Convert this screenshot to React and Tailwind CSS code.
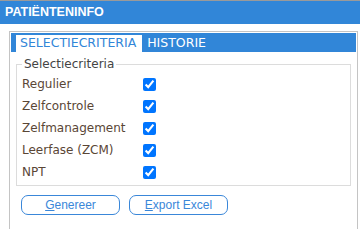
export default function App() {
  const items = ["Regulier", "Zelfcontrole", "Zelfmanagement", "Leerfase (ZCM)", "NPT"];
  return (
    <div className="w-[360px] h-[229px] bg-white overflow-hidden font-['DejaVu_Sans',sans-serif]">
      <div className="border-t border-[#9a9a9a] bg-[#3186d8] h-[24px] flex items-center px-[5px] text-white text-[12.5px] font-bold font-['Liberation_Sans',sans-serif]">
        PATIËNTENINFO
      </div>
      <div className="ml-[9px] mr-[2px] mt-[7px] h-[198px] border border-[#c4c4c4] border-b-0 pt-px px-px">
        <div className="bg-[#3186d8] h-[19px] flex items-end pl-[5px]">
          <div className="bg-white text-[#3186d8] text-[12.5px] h-[17px] pl-[4px] pr-[6px] flex items-center leading-none">
            SELECTIECRITERIA
          </div>
          <div className="text-white text-[12.5px] h-[17px] pl-[5px] flex items-center leading-none">HISTORIE</div>
        </div>
        <fieldset className="mx-[5px] mt-[3px] border border-[#dcdcdc] pl-[5px] pb-[2px]">
          <legend className="text-[12px] text-[#444] px-[2px]">Selectiecriteria</legend>
          {items.map((t) => (
            <label key={t} className="flex items-center h-[22px] text-[12px] text-[#5a4636]">
              <span className="w-[121px]">{t}</span>
              <input type="checkbox" defaultChecked className="w-[13px] h-[13px] m-0" />
            </label>
          ))}
        </fieldset>
        <div className="flex gap-[9px] ml-[10px] mt-[9px] font-['Liberation_Sans',sans-serif]">
          <button className="w-[99px] h-[20px] border border-[#3a87d9] rounded-[7px] text-[#3a87d9] text-[12px] leading-none">
            <span className="underline">G</span>enereer
          </button>
          <button className="w-[99px] h-[20px] border border-[#3a87d9] rounded-[7px] text-[#3a87d9] text-[12px] leading-none">
            <span className="underline">E</span>xport Excel
          </button>
        </div>
      </div>
    </div>
  );
}
